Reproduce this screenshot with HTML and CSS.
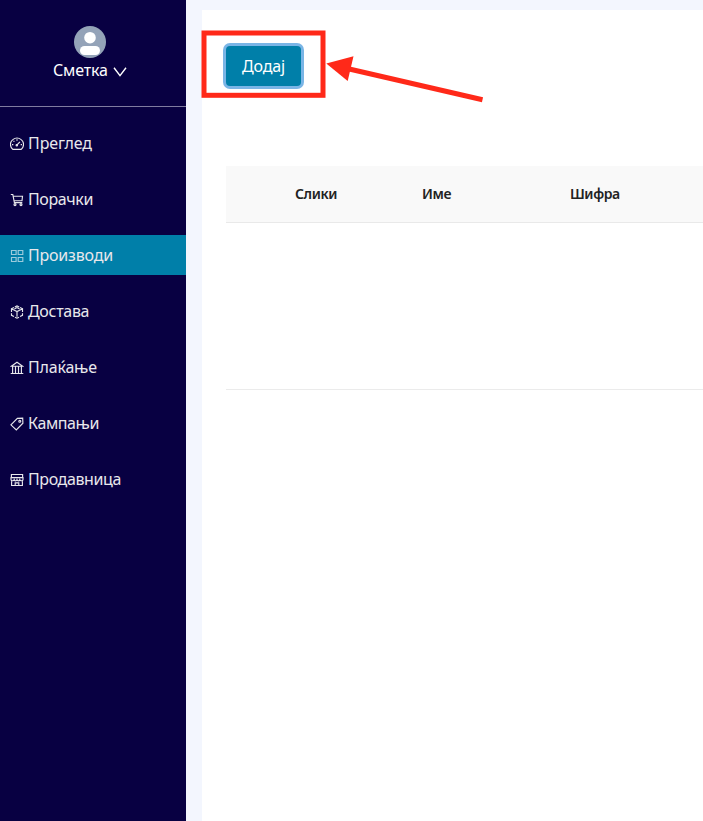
FILE: index.html
```
<!DOCTYPE html>
<html lang="mk">
<head>
<meta charset="utf-8">
<title>Производи</title>
<link rel="stylesheet" href="styles.css">
</head>
<body>
<div class="app">
  <aside class="sidebar">
    <div class="account">
      <svg class="avatar" viewBox="0 0 32 32"><circle cx="16" cy="16" r="16" fill="#94a3b8"/><circle cx="16" cy="11.7" r="5.8" fill="#fff"/><rect x="6" y="20" width="20" height="9" rx="4.5" fill="#fff"/></svg>
      <div class="account-name"><span class="label">Сметка</span><svg class="chevron" viewBox="0 0 14 10"><path d="M1 .8 7 8.6 13 .8"/></svg></div>
    </div>
    <nav class="menu">
      <a class="item"><svg class="icon" viewBox="0 0 14 14"><path d="M2.8 12.4C-.6 9.3 0 4.6 2.8 2.6c2.5-1.9 5.9-1.9 8.4 0 2.8 2 3.4 6.7 0 9.8ZM7 2.3v1.4M3.5 3.8l.9.9M2 7.6h1.3M10.7 7.6H12M6.8 8.2l3.1-3.4"/><circle cx="6.8" cy="8.2" r=".7"/></svg><span class="label overview">Преглед</span></a>
      <a class="item"><svg class="icon" viewBox="0 0 14 14"><path d="M.8 1.5h2l1.6 8.1h7.9M3.1 3.2h9.4l-.5 4.5H4.2"/><circle cx="5" cy="11.6" r="1"/><circle cx="11" cy="11.6" r="1"/></svg><span class="label orders">Порачки</span></a>
      <a class="item active"><svg class="icon" viewBox="0 0 14 14"><path d="M1.5 1.5h4.6v4H1.5zM8.2 1.5h4.6v4H8.2zM1.5 8.5h4.6v4H1.5zM8.2 8.5h4.6v4H8.2z"/></svg><span class="label products">Производи</span></a>
      <a class="item"><svg class="icon" viewBox="0 0 14 14"><path d="M4.8 2 7 1l2.2 1M1.5 7V3.8L7 6.5l5.5-2.7V7M1.5 3.8 4 2.5M12.5 3.8 10 2.5M1.5 8.3v2L4 11.6M12.5 8.3v2L10 11.6M5 12.2l2 1 2-1M7 6.5v5.2M4.4 3.9 7 2.6l2.6 1.3"/></svg><span class="label delivery">Достава</span></a>
      <a class="item"><svg class="icon" viewBox="0 0 14 14"><path d="M.7 12.5h12.6M1.3 5.2 7 1.3l5.7 3.9ZM2.6 5.4v7M5.5 5.4v7M8.5 5.4v7M11.4 5.4v7"/></svg><span class="label payment">Плаќање</span></a>
      <a class="item"><svg class="icon" viewBox="0 0 14 14"><path d="m.9 7.8 6.5-6.4 5.3-.3.2 5.1-6.6 6.7Z"/><circle cx="9.8" cy="4.2" r="1"/></svg><span class="label campaigns">Кампањи</span></a>
      <a class="item"><svg class="icon" viewBox="0 0 14 14"><path d="M1.4 4.6V1.5h11.2v3.1M1 4.6h12v1.8c0 1.7-2.8 1.9-3.2.3-.6 1.6-2.3 1.6-2.8 0-.5 1.6-2.2 1.6-2.8 0C3.8 8.3 1 8.1 1 6.4ZM1.6 8v4.5h10.8V8M5.2 12.6V9.9h3.6v2.7"/></svg><span class="label store">Продавница</span></a>
    </nav>
  </aside>
  <main class="content">
    <div class="toolbar"><button class="add"><span class="label">Додај</span></button></div>
    <div class="table">
      <div class="head"><span class="images">Слики</span><span class="name">Име</span><span class="code">Шифра</span></div>
      <div class="empty"></div>
    </div>
  </main>
</div>
<svg class="annotation" viewBox="0 0 703 821"><rect x="204" y="33" width="119" height="62.3"/><path d="M346 68.2 482.5 99.7"/><path class="tip" d="M326.3 63.5 353.5 56.3 347.7 81Z"/></svg>
</body>
</html>
```
FILE: styles.css
```
* { box-sizing: border-box; }
body { margin: 0; font: 16px/24px "Noto Sans", sans-serif; color: #222; background: #f3f6fe; overflow: hidden; }
.app { display: flex; height: 821px; }
.sidebar { width: 186px; flex: none; background: #080042; color: #e8e8ec; }
.account { height: 107px; padding: 26px 6px 0 0; border-bottom: 1px solid #7f7ba0; display: flex; flex-direction: column; align-items: center; }
.avatar { width: 32px; height: 32px; }
.account-name { display: flex; align-items: center; width: 74px; justify-content: space-between; color: #fff; letter-spacing: -.15px; }
.chevron { width: 14px; height: 10px; margin-top: 3px; fill: none; stroke: currentColor; stroke-width: 1.4; }
.label { white-space: nowrap; }
.menu { padding-top: 16px; display: flex; flex-direction: column; gap: 16px; }
.item { height: 40px; padding-left: 10px; display: flex; align-items: center; gap: 4px; }
.overview { letter-spacing: -.1px; }
.orders { letter-spacing: -.4px; }
.products, .payment { letter-spacing: -.2px; }
.delivery { letter-spacing: -.3px; }
.campaigns, .store { letter-spacing: -.4px; }
.active { background: #007fa9; }
.icon { width: 14px; height: 14px; flex: none; margin-top: 2px; fill: none; stroke: currentColor; stroke-width: 1.15; }
.active .icon { color: #9bcbdc; }
.content { flex: 1; min-width: 0; margin: 10px 0 0 16px; padding: 36px 0 0 24px; background: #fff; }
.toolbar { height: 120px; }
.add { width: 75px; height: 40px; padding: 0; border: 0; border-radius: 4px; background: #007fa9; box-shadow: 0 0 0 3px #7ab5e6; color: #fff; font: inherit; letter-spacing: -.1px; display: flex; align-items: center; justify-content: center; }
.head { height: 57px; display: grid; grid-template-columns: 69px 127px 148px 1fr; align-items: center; background: #f9f9f9; border-bottom: 1px solid #e9e9e9; font-size: 14px; font-weight: 600; letter-spacing: -.4px; }
.images { grid-column: 2; }
.name { grid-column: 3; }
.code { grid-column: 4; }
.empty { height: 167px; border-bottom: 1px solid #ebebeb; }
.annotation { position: absolute; inset: 0; width: 703px; height: 821px; pointer-events: none; fill: none; stroke: #ff2919; stroke-width: 5; }
.annotation .tip { fill: #ff2919; stroke: none; }
```
